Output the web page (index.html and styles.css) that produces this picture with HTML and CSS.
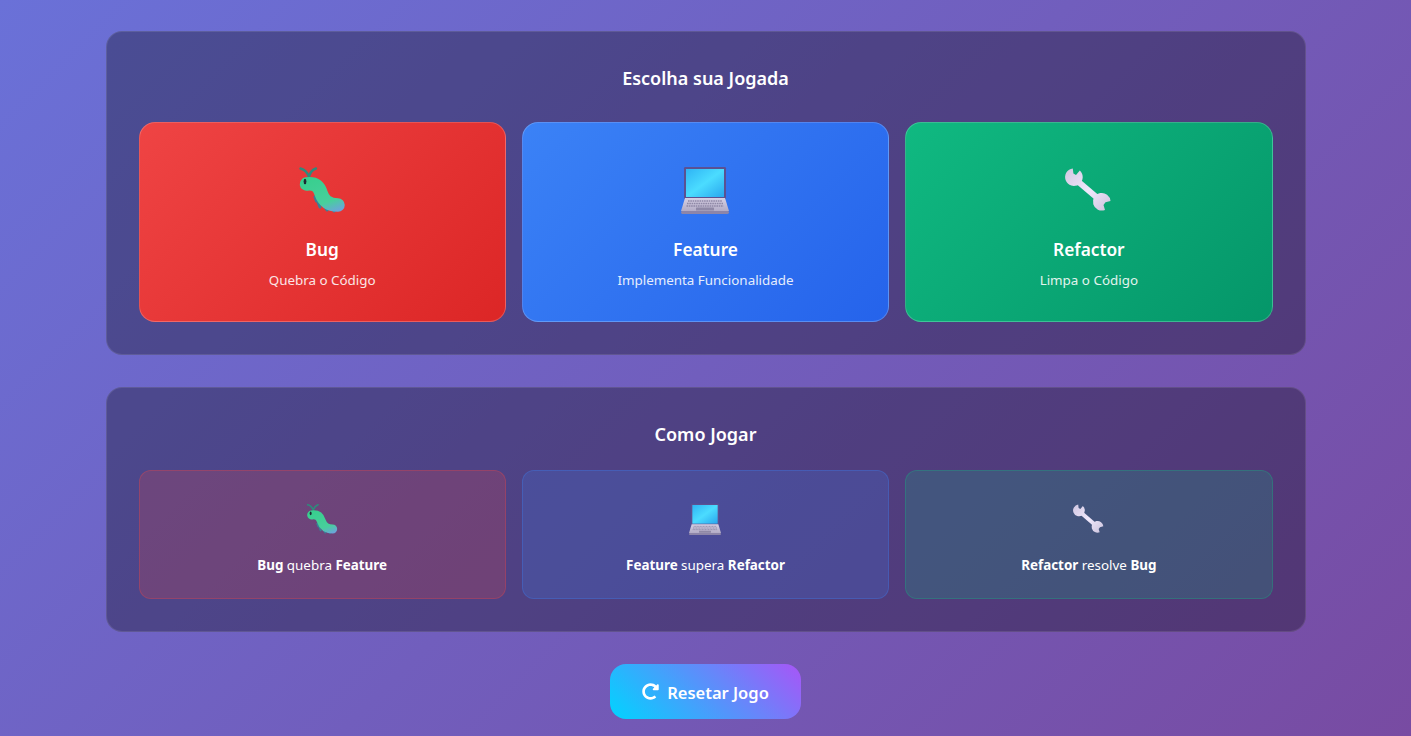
FILE: index.html
```html
<!DOCTYPE html>
<html lang="pt-BR">
<head>
  <meta charset="UTF-8" />
  <meta name="viewport" content="width=device-width, initial-scale=1" />
  <title>Bug Feature Refactor</title>
  <link rel="stylesheet" href="styles.css">
</head>
<body>
  <svg class="defs" width="0" height="0" aria-hidden="true">
    <defs>
      <linearGradient id="bugBody" gradientUnits="userSpaceOnUse" x1="16" y1="10" x2="30" y2="48">
        <stop offset="0" stop-color="#38cf8e" />
        <stop offset="0.72" stop-color="#48cf9c" />
        <stop offset="1" stop-color="#6aa6d8" />
      </linearGradient>
      <linearGradient id="laptopScreen" x1="0" y1="0" x2="1" y2="1">
        <stop offset="0" stop-color="#2fb4f5" />
        <stop offset="0.5" stop-color="#4bdcff" />
        <stop offset="1" stop-color="#2aa6ee" />
      </linearGradient>
      <linearGradient id="laptopBase" x1="0" y1="0" x2="0" y2="1">
        <stop offset="0" stop-color="#d6d0e4" />
        <stop offset="1" stop-color="#b3acc6" />
      </linearGradient>
      <linearGradient id="wrenchMetal" gradientUnits="userSpaceOnUse" x1="2" y1="2" x2="46" y2="46">
        <stop offset="0" stop-color="#d2c8e2" />
        <stop offset="0.5" stop-color="#f0e8fc" />
        <stop offset="1" stop-color="#c9c0da" />
      </linearGradient>
      <symbol id="bug" viewBox="0 0 48 48">
        <path class="bug-legs" d="M17 31l1.5 4M20 36l2 5M27 41l2 3M34 42l2 3" />
        <path class="bug-antenna" d="M2.5 2.5c4 1 7 4 8.5 8.5M18 2.5c-3 1-6 4-7 8.5" />
        <path class="bug-body" d="M8.5 18C16 17 20.5 19 23 27C25 33 29 39 40 39" />
        <ellipse class="bug-eye" cx="7" cy="15.5" rx="1.4" ry="2.8" />
      </symbol>
      <symbol id="laptop" viewBox="0 0 48 48">
        <rect x="3" y="1" width="42" height="32" rx="1.2" fill="#5b5192" />
        <rect x="5" y="3" width="38" height="28" fill="url(#laptopScreen)" />
        <path d="M4 32h40l4 13H0z" fill="url(#laptopBase)" />
        <rect x="0" y="45" width="48" height="3" rx="1.4" fill="#8d85a8" />
        <path class="laptop-keys" d="M7 35h34M6 37.5h36M5.5 40h37" />
        <rect x="15" y="41.5" width="18" height="3" rx=".6" fill="#9089a6" />
      </symbol>
      <symbol id="wrench" viewBox="0 0 48 48">
        <path class="wrench-handle" d="M13 15.5L33 32.5" />
        <path class="wrench-head" d="M14.8 4.6A8.8 8.8 0 1 1 7.8 2.4L8.4 7.5L11 9Z" />
        <path class="wrench-head" d="M45.5 35A8.8 8.8 0 1 0 40 43.9L38.5 39L40.5 36.3Z" />
      </symbol>
    </defs>
  </svg>

  <main class="container">
    <section class="panel">
      <h2 class="panel-title titulo-jogada">Escolha sua Jogada</h2>
      <div class="grid">
        <div class="jogada jogada-bug">
          <svg class="emoji"><use href="#bug" /></svg>
          <h3>Bug</h3>
          <p>Quebra o Código</p>
        </div>
        <div class="jogada jogada-feature">
          <svg class="emoji"><use href="#laptop" /></svg>
          <h3>Feature</h3>
          <p>Implementa Funcionalidade</p>
        </div>
        <div class="jogada jogada-refactor">
          <svg class="emoji"><use href="#wrench" /></svg>
          <h3>Refactor</h3>
          <p>Limpa o Código</p>
        </div>
      </div>
    </section>

    <section class="panel">
      <h2 class="panel-title titulo-regras">Como Jogar</h2>
      <div class="grid">
        <div class="regra regra-bug">
          <svg class="emoji-small"><use href="#bug" /></svg>
          <p><strong>Bug</strong> quebra <strong>Feature</strong></p>
        </div>
        <div class="regra regra-feature">
          <svg class="emoji-small"><use href="#laptop" /></svg>
          <p><strong>Feature</strong> supera <strong>Refactor</strong></p>
        </div>
        <div class="regra regra-refactor">
          <svg class="emoji-small"><use href="#wrench" /></svg>
          <p><strong>Refactor</strong> resolve <strong>Bug</strong></p>
        </div>
      </div>
    </section>

    <button class="reset">
      <svg class="reset-icon" viewBox="0 0 512 512"><path d="M256.455 8c66.269.119 126.437 26.233 170.859 68.685l35.715-35.715C478.149 25.851 504 36.559 504 57.941V192c0 13.255-10.745 24-24 24H345.941c-21.382 0-32.09-25.851-16.971-40.971l41.75-41.75c-30.864-28.899-70.801-44.907-113.23-45.273-92.398-.798-170.283 73.977-169.484 169.442C88.764 348.009 162.184 424 256 424c41.127 0 79.997-14.678 110.629-41.556 4.743-4.161 11.906-3.908 16.368.553l39.662 39.662c4.872 4.872 4.631 12.815-.482 17.433C378.202 479.813 319.926 504 256 504 119.034 504 8.001 392.967 8 256.002 7.999 119.193 119.646 7.755 256.455 8z" /></svg>
      Resetar Jogo
    </button>
  </main>
</body>
</html>
```

FILE: styles.css
```css
* {
  box-sizing: border-box;
}

html {
  height: 100%;
  overflow: hidden;
}

body {
  margin: 0;
  height: 100%;
  padding-top: 31px;
  font-family: 'Noto Sans', 'Open Sans', sans-serif;
  color: #fff;
  background: linear-gradient(135deg, #6a71d8 0%, #784ba2 100%);
}

.defs {
  position: absolute;
}

.container {
  width: 1200px;
  margin: 0 auto;
  display: flex;
  flex-direction: column;
  align-items: center;
  gap: 32px;
}

.panel {
  width: 100%;
  padding: 32px;
  background: rgba(0, 0, 0, 0.3);
  border: 1px solid rgba(255, 255, 255, 0.1);
  border-radius: 16px;
}

.panel-title {
  margin: 0;
  font-size: 18px;
  line-height: 28px;
  font-weight: 600;
  text-align: center;
}

.titulo-jogada {
  margin-bottom: 30px;
}

.titulo-regras {
  margin-bottom: 22px;
}

.grid {
  display: grid;
  grid-template-columns: repeat(3, 1fr);
  gap: 16px;
}

.jogada {
  height: 200px;
  padding: 43px 16px 0;
  text-align: center;
  border: 1px solid rgba(255, 255, 255, 0.2);
  border-radius: 16px;
  cursor: pointer;
}

.jogada-bug {
  background: linear-gradient(135deg, #ef4444, #dc2626);
}

.jogada-feature {
  background: linear-gradient(135deg, #3b82f6, #2563eb);
}

.jogada-refactor {
  background: linear-gradient(135deg, #10b981, #059669);
}

.emoji {
  display: block;
  width: 48px;
  height: 48px;
  margin: 0 auto 24px;
}

.jogada h3 {
  margin: 0 0 8px;
  font-size: 17.3px;
  line-height: 24px;
  font-weight: 600;
}

.jogada p {
  margin: 0;
  font-size: 13.4px;
  line-height: 20px;
  opacity: 0.88;
}

.regra {
  height: 129px;
  padding: 32px 16px 0;
  text-align: center;
  border: 1px solid;
  border-radius: 12px;
}

.regra-bug {
  background: rgba(239, 68, 68, 0.2);
  border-color: rgba(239, 68, 68, 0.3);
}

.regra-feature {
  background: rgba(59, 130, 246, 0.2);
  border-color: rgba(59, 130, 246, 0.3);
}

.regra-refactor {
  background: rgba(16, 185, 129, 0.2);
  border-color: rgba(16, 185, 129, 0.3);
}

.emoji-small {
  display: block;
  width: 32px;
  height: 32px;
  margin: 0 auto 20px;
}

.regra p {
  margin: 0;
  font-size: 13.4px;
  line-height: 20px;
}

.regra strong {
  font-weight: 700;
}

.reset {
  display: flex;
  align-items: center;
  justify-content: center;
  gap: 8px;
  width: 191px;
  height: 55px;
  padding: 1px 0 0;
  font-family: inherit;
  font-size: 16.5px;
  font-weight: 600;
  color: #fff;
  background: linear-gradient(45deg, #00d4ff, #a855f7);
  border: none;
  border-radius: 16px;
  cursor: pointer;
}

.reset-icon {
  width: 17px;
  height: 17px;
  margin-top: -2px;
  fill: #fff;
}

.bug-body {
  fill: none;
  stroke: url(#bugBody);
  stroke-width: 13.5;
  stroke-linecap: round;
}

.bug-legs {
  fill: none;
  stroke: #3a7f96;
  stroke-width: 3;
  stroke-linecap: round;
}

.bug-antenna {
  fill: none;
  stroke: #2f8a7c;
  stroke-width: 2.4;
  stroke-linecap: round;
}

.bug-eye {
  fill: #1d2a33;
}

.laptop-keys {
  fill: none;
  stroke: #8f88a6;
  stroke-width: 1.3;
  stroke-dasharray: 1.6 .7;
}

.wrench-handle {
  fill: none;
  stroke: url(#wrenchMetal);
  stroke-width: 6;
}

.wrench-head {
  fill: url(#wrenchMetal);
}
```
